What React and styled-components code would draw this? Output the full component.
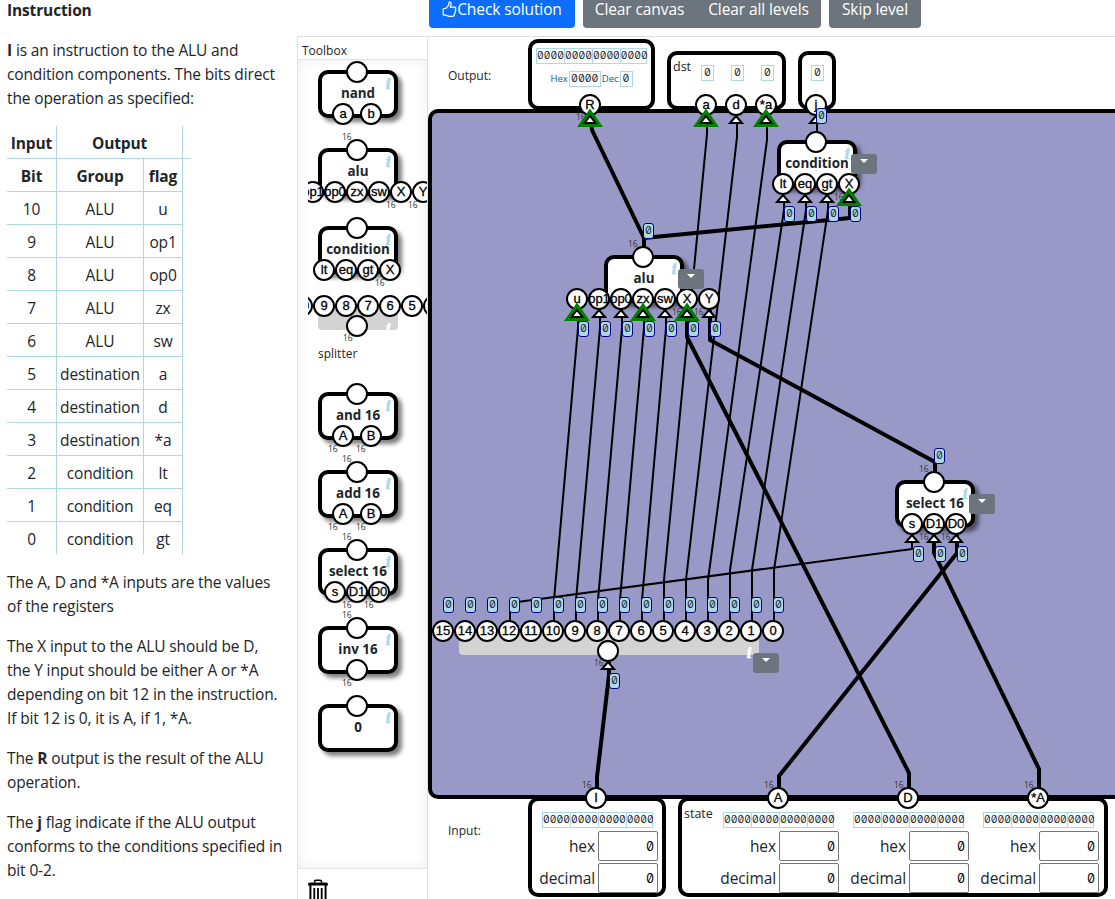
import React from 'react';
import styled, { createGlobalStyle, css } from 'styled-components';

const GlobalStyle = createGlobalStyle`
  *, *::before, *::after { box-sizing: border-box; }
  body {
    margin: 0;
    background: #fff;
    color: #212529;
    font-family: "Open Sans", "Noto Sans", sans-serif;
    font-size: 15.5px;
    line-height: 24px;
    overflow: hidden;
  }
`;

const mono = css`
  font-family: Inter, "DejaVu Sans Mono", monospace;
  font-feature-settings: "zero" 1, "tnum" 1;
`;

const Page = styled.div`
  display: flex;
  width: 1115px;
  height: 899px;
  overflow: hidden;
`;

/* ---------- Instructions ---------- */

const Instructions = styled.section`
  flex: none;
  width: 297px;
  padding-left: 7px;
  margin-top: -2px;
  white-space: nowrap;
  letter-spacing: -0.14px;
`;

const Heading = styled.h3`
  margin: 0 0 16px;
  font-size: inherit;
  font-weight: 700;
`;

const Text = styled.p`
  margin: 0 0 16px;
`;

const Table = styled.table`
  table-layout: fixed;
  width: 184px;
  margin: 0 0 16px;
  border-collapse: separate;
  border-spacing: 0;
`;

const Cell = styled.td`
  height: ${(p) => (p.$last ? 32 : 33)}px;
  padding: 1px 0 0;
  text-align: center;
  font-weight: ${(p) => (p.$head ? 700 : 400)};
  border-right: ${(p) => (p.$open ? 'none' : '1px solid lightblue')};
  border-bottom: ${(p) => (p.$last ? 'none' : '1px solid lightblue')};
`;

/* ---------- Toolbox ---------- */

const Main = styled.div`
  flex: none;
  width: 900px;
  display: flex;
  flex-direction: column;
`;

const Toolbar = styled.header`
  flex: none;
  height: 36px;
  padding: 0 0 8px 132px;
  display: flex;
  align-items: flex-end;
  gap: 8px;
`;

const ButtonGroup = styled.div`
  display: flex;
`;

const Button = styled.button`
  width: ${(p) => p.$w}px;
  height: 38px;
  padding: 0;
  border: 0;
  border-radius: ${(p) => p.$radius || '4px'};
  background: ${(p) => (p.$primary ? '#0d6efd' : '#6c757d')};
  color: #fff;
  font: 400 15.5px/24px "Open Sans", "Noto Sans", sans-serif;
  letter-spacing: -0.1px;
  white-space: nowrap;
  display: flex;
  align-items: center;
  justify-content: center;
`;

const Columns = styled.div`
  flex: none;
  height: 863px;
  display: flex;
  border-top: 1px solid #dee2e6;
`;

const Toolbox = styled.aside`
  flex: none;
  width: 131px;
  display: flex;
  flex-direction: column;
  border-left: 1px solid #dee2e6;
  border-right: 1px solid #dee2e6;
`;

const ToolboxTitle = styled.div`
  height: 23px;
  padding: 3px 0 0 4px;
  font-size: 12px;
  line-height: 22px;
  border-bottom: 1px solid #dee2e6;
`;

const ToolList = styled.div`
  height: 809px;
  padding-left: 10px;
  background: #fff;
  box-shadow: inset 0 0 14px rgba(0, 0, 0, 0.07);
  border-bottom: 1px solid #dee2e6;
`;

const ToolScroll = styled.div`
  height: 808px;
  padding: 10px 0 0 10px;
  overflow: hidden;
`;

const Tool = styled.div`
  height: ${(p) => p.$h || 78}px;
`;

const ToolCaption = styled.div`
  padding-top: 15px;
  font-size: 12px;
  line-height: 22px;
`;

const Trash = styled.div`
  padding: 10px 0 0 10px;
  svg { display: block; }
`;

/* ---------- Components of a circuit ---------- */

const NodeRoot = styled.div`
  position: ${(p) => (p.$placed ? 'absolute' : 'relative')};
  left: ${(p) => p.$x || 0}px;
  top: ${(p) => p.$y || 0}px;
  width: ${(p) => p.$w || 80}px;
`;

const NodeBox = styled.div`
  height: 48px;
  padding-top: 8px;
  border: 4px solid #000;
  border-radius: 10px;
  background: #fff;
  box-shadow: 4px 4px 4px rgba(0, 0, 0, 0.5);
  text-align: center;
  font-size: 13.4px;
  font-weight: 700;
  line-height: 22px;
  white-space: nowrap;
`;

const SplitterBox = styled.div`
  height: 24px;
  border-radius: 0 0 4px 4px;
  background: lightgray;
`;

const PinRow = styled.div`
  position: absolute;
  left: ${(p) => p.$cx || 39}px;
  top: ${(p) => p.$top}px;
  transform: translateX(-50%);
  display: flex;
  gap: ${(p) => p.$gap || 0}px;
`;

const Pin = styled.div`
  position: ${(p) => (p.$placed ? 'absolute' : 'relative')};
  left: ${(p) => (p.$placed ? p.$x - 11 : 0)}px;
  top: ${(p) => (p.$placed ? p.$y - 11 : 0)}px;
  flex: none;
  width: 22px;
  height: 22px;
  border: 2px solid #000;
  border-radius: 50%;
  background: #fff;
  color: #000;
  display: flex;
  align-items: center;
  justify-content: center;
  font: 400 13px/18px "Liberation Sans", Arial, sans-serif;
  -webkit-text-stroke: 0.3px #000;
  white-space: nowrap;
`;

const Width16 = styled.span`
  position: absolute;
  left: ${(p) => p.$x}px;
  top: ${(p) => p.$y}px;
  color: #333;
  font: 400 8.5px/10px "Open Sans", sans-serif;
  -webkit-text-stroke: 0;
`;

const Info = styled.span`
  position: absolute;
  right: ${(p) => p.$right || 7}px;
  top: ${(p) => p.$top || 6}px;
  color: ${(p) => (p.$white ? '#fff' : 'lightblue')};
  font: italic 700 14.5px/16px "DejaVu Serif", "Liberation Serif", serif;
  -webkit-text-stroke: 0.4px currentColor;
`;

const MenuButton = styled.button`
  position: absolute;
  left: ${(p) => p.$x}px;
  top: ${(p) => p.$y}px;
  width: 26px;
  height: 20px;
  padding: 5px 0 0;
  border: 0;
  border-radius: 3px;
  background: #6c757d;
  display: flex;
  align-items: flex-start;
  justify-content: center;
  &::after {
    content: '';
    width: 0;
    height: 0;
    border-top: 4.5px solid #fff;
    border-left: 4.5px solid transparent;
    border-right: 4.5px solid transparent;
  }
`;

/* ---------- Workspace ---------- */

const Workspace = styled.main`
  width: 700px;
  display: flex;
  flex-direction: column;
`;

const OutputRow = styled.div`
  flex: none;
  height: 72px;
  display: flex;
  align-items: flex-end;
`;

const InputRow = styled.div`
  flex: none;
  display: flex;
  align-items: flex-start;
  margin-top: -2px;
`;

const RowLabel = styled.div`
  flex: none;
  align-self: ${(p) => p.$align || 'center'};
  width: 100px;
  padding: ${(p) => p.$pad || '6px 0 0 20px'};
  font-size: 12px;
`;

const Terminal = styled.div`
  flex: none;
  width: ${(p) => p.$w}px;
  height: ${(p) => p.$h}px;
  margin: ${(p) => p.$m || 0};
  padding-top: ${(p) => p.$pt || 0}px;
  border: 4px solid #000;
  border-radius: 10px;
  background: #fff;
  display: flex;
  flex-direction: ${(p) => (p.$column ? 'column' : 'row')};
  align-items: ${(p) => (p.$column ? 'center' : 'flex-start')};
`;

const GroupLabel = styled.div`
  flex: none;
  width: ${(p) => p.$w}px;
  padding: ${(p) => p.$pad};
  font-size: 12.5px;
  line-height: 18px;
`;

const Bits = styled.div`
  display: flex;
  width: 111px;
  height: 16px;
  border: 1px solid lightblue;
`;

const Nibble = styled.span`
  ${mono}
  flex: 1;
  text-align: center;
  font-size: 10.4px;
  line-height: 14px;
  color: #212529;
  & + & { border-left: 1px solid lightblue; }
`;

const ReadoutRow = styled.div`
  display: flex;
  align-items: center;
  gap: 1px;
  margin-top: 7px;
  color: #0b5f85;
  font-size: 9.5px;
  line-height: 16px;
`;

const Digit = styled.span`
  ${mono}
  width: ${(p) => p.$w || 13}px;
  height: 16px;
  margin: ${(p) => p.$m || 0};
  border: 1px solid lightblue;
  text-align: center;
  font-size: 10.6px;
  line-height: 14px;
  color: #212529;
`;

const InputCell = styled.div`
  flex: none;
  width: 130px;
  padding: 11px 4px 0 0;
  display: flex;
  flex-direction: column;
  align-items: flex-end;
`;

const CellBits = styled(Bits)`
  margin: 0 5px 2px 0;
`;

const Field = styled.label`
  display: flex;
  align-items: center;
  gap: 3px;
  height: 32px;
  font-size: 15.5px;
  letter-spacing: -0.1px;
`;

const FieldValue = styled.span`
  ${mono}
  width: 60px;
  height: 30px;
  padding-right: 3px;
  border: 1px solid #767676;
  border-radius: 2px;
  text-align: right;
  font-size: 12.5px;
  line-height: 29px;
  color: #000;
`;

const Board = styled.div`
  position: relative;
  z-index: 1;
  flex: none;
  width: 700px;
  height: 690px;
  border: 4px solid #000;
  border-radius: 10px;
  background: #9999c8;
`;

const Layer = styled.div`
  position: absolute;
  inset: -4px;
`;

const Wires = styled.svg`
  position: absolute;
  left: 0;
  top: 0;
  overflow: visible;
`;

const Value = styled.span`
  ${mono}
  position: absolute;
  left: ${(p) => p.$x - 5.5}px;
  top: ${(p) => p.$y - 8}px;
  width: 11px;
  height: 16px;
  border: 1px solid #000080;
  border-radius: 3px;
  background: lightblue;
  color: #212529;
  display: flex;
  justify-content: center;
  font-size: 10.6px;
  line-height: 14px;
`;

/* Board coordinates start at this offset. */
const OX = 428;
const OY = 109;
const bx = (x) => x - OX;
const by = (y) => y - OY;

function Node({ title, out16, pins = [], wide = [], gap = 0, menu, ...pos }) {
  return (
    <NodeRoot {...pos}>
      <NodeBox>{title}</NodeBox>
      <Info>i</Info>
      <Pin $placed $x={39} $y={2} />
      {out16 && <Width16 $x={24} $y={-16}>16</Width16>}
      <PinRow $top={33} $gap={gap}>
        {pins.map((p, i) => (
          <Pin key={i}>
            {p}
            {wide.includes(i) && <Width16 $x={-6} $y={17}>16</Width16>}
          </Pin>
        ))}
      </PinRow>
      {menu && <MenuButton $x={74} $y={14} />}
    </NodeRoot>
  );
}

const BITS = Array.from({ length: 16 }, (_, i) => 15 - i);

function Splitter({ w, cx, rowCx, menu, ...pos }) {
  return (
    <NodeRoot $w={w} {...pos}>
      <SplitterBox />
      <Info $white $right={7} $top={menu ? 14 : 15}>i</Info>
      <PinRow $top={-11} $cx={rowCx}>
        {BITS.map((b) => <Pin key={b}>{b}</Pin>)}
      </PinRow>
      <Pin $placed $x={cx} $y={20} />
      <Width16 $x={cx - 14} $y={27}>16</Width16>
      {menu && <MenuButton $x={294} $y={22} />}
    </NodeRoot>
  );
}

function BitString({ as: Wrap = Bits }) {
  return <Wrap>{[0, 1, 2, 3].map((i) => <Nibble key={i}>0000</Nibble>)}</Wrap>;
}

function InputGroup() {
  return (
    <InputCell>
      <BitString as={CellBits} />
      <Field>hex<FieldValue>0</FieldValue></Field>
      <Field>decimal<FieldValue>0</FieldValue></Field>
    </InputCell>
  );
}

const thin = [
  ...[[553, 577], [575, 599], [597, 621], [619, 643], [641, 665]].map(([s, t]) => [
    [s + 1, 625], [s + 1, 600], [t + 1, 328], [t + 1, 310],
  ]),
  ...[[663, 706, 134], [685, 736, 137], [707, 766, 140]].map(([s, t, y]) => [
    [s + 1, 625], [s + 1, 580], [t + 1, y], [t + 1, 116],
  ]),
  ...[[729, 783], [751, 805], [773, 827]].map(([s, t]) => [
    [s + 1, 625], [s + 1, 570], [t + 1, 210], [t + 1, 195],
  ]),
  [[510, 625], [510, 603], [912, 549], [912, 535]],
  [[817, 120], [817, 142]],
];

const thick = [
  [[591, 120], [592, 130], [644, 238], [644, 257]],
  [[644, 238], [850, 218], [850, 195]],
  [[687, 310], [687, 337], [909, 773], [909, 797]],
  [[710, 310], [710, 340], [935, 462], [935, 482]],
  [[934, 535], [934, 553], [1039, 769], [1039, 797]],
  [[957, 535], [957, 553], [779, 776], [779, 797]],
  [[609, 662], [609, 675], [597, 777], [597, 797]],
];

const arrows = [
  [736, 105], [816, 105], [783, 184], [805, 184], [827, 184],
  [599, 299], [621, 299], [665, 299], [709, 299],
  [912, 524], [934, 524], [956, 524], [608, 651],
];
const greenArrows = [
  [590, 105], [706, 105], [766, 105], [849, 184], [577, 299], [643, 299], [687, 299],
];

const values = [
  [821.5, 116], [648.5, 231], [939.5, 456],
  ...[783, 805, 827, 849].map((x) => [x + 6.5, 214]),
  ...[577, 599, 621, 643, 665, 687, 709].map((x) => [x + 6.5, 329]),
  ...[912, 934, 956].map((x) => [x + 6.5, 554]),
  ...BITS.map((b, i) => [443.5 + 22 * i + 5, 605]),
  [614.5, 681],
];

const ports = [
  ['R', 590, 105], ['a', 706, 105], ['d', 736, 105], ['*a', 766, 105], ['j', 816, 105],
  ['I', 596, 798], ['A', 778, 798], ['D', 908, 798], ['*A', 1038, 798],
];

const rows = [
  [10, 'ALU', 'u'], [9, 'ALU', 'op1'], [8, 'ALU', 'op0'], [7, 'ALU', 'zx'], [6, 'ALU', 'sw'],
  [5, 'destination', 'a'], [4, 'destination', 'd'], [3, 'destination', '*a'],
  [2, 'condition', 'lt'], [1, 'condition', 'eq'], [0, 'condition', 'gt'],
];

const path = (pts) => 'M' + pts.map((p) => p.join(' ')).join('L');

function Circuit() {
  return (
    <Layer>
      <Wires width="700" height="690" viewBox={`${OX} ${OY} 700 690`} fill="none" stroke="#000" strokeLinejoin="round">
        {thin.map((w, i) => <path key={i} d={path(w)} strokeWidth="2" />)}
        {thick.map((w, i) => <path key={i} d={path(w)} strokeWidth="4" />)}
      </Wires>
      <Node title="condition" pins={['lt', 'eq', 'gt', 'X']} wide={[3]} menu $placed $x={bx(777)} $y={by(140)} />
      <Node title="alu" out16 pins={['u', 'op1', 'op0', 'zx', 'sw', 'X', 'Y']} wide={[5, 6]} menu $placed $x={bx(604)} $y={by(255)} />
      <Node title="select 16" out16 pins={['s', 'D1', 'D0']} wide={[1, 2]} menu $placed $x={bx(895)} $y={by(480)} />
      <Splitter w={300} cx={149} rowCx={149} menu $placed $x={bx(459)} $y={by(631)} />
      {ports.map(([t, x, y]) => <Pin key={t} $placed $x={bx(x)} $y={by(y)}>{t}</Pin>)}
      <Width16 $x={bx(576)} $y={by(112)}>16</Width16>
      {[596, 778, 908, 1038].map((x) => <Width16 key={x} $x={bx(x - 14)} $y={by(780)}>16</Width16>)}
      <Wires width="700" height="690" viewBox={`${OX} ${OY} 700 690`} fill="#fff" stroke="#000">
        {arrows.map(([x, y]) => (
          <path key={`${x}-${y}`} strokeWidth="2" d={`M${x} ${y + 11}L${x + 6} ${y + 18}H${x - 6}Z`} />
        ))}
        {greenArrows.map(([x, y]) => (
          <g key={`${x}-${y}`}>
            <path d={`M${x} ${y + 3.5}L${x + 13} ${y + 22}H${x - 13}Z`} fill="green" stroke="none" />
            <path strokeWidth="2" d={`M${x} ${y + 11}L${x + 5.5} ${y + 18}H${x - 5.5}Z`} />
          </g>
        ))}
      </Wires>
      {values.map(([x, y]) => <Value key={`${x}-${y}`} $x={bx(x)} $y={by(y)}>0</Value>)}
    </Layer>
  );
}

export default function App() {
  return (
    <Page>
      <GlobalStyle />
      <Instructions>
        <Heading>Instruction</Heading>
        <Text>
          <b>I</b> is an instruction to the ALU and<br />
          condition components. The bits direct<br />
          the operation as specified:
        </Text>
        <Table>
          <colgroup>
            <col width="50" />
            <col width="87" />
            <col width="39" />
            <col width="8" />
          </colgroup>
          <tbody>
            <tr>
              <Cell as="th" $head>Input</Cell>
              <Cell as="th" $head colSpan={2}>Output</Cell>
              <Cell as="th" $open />
            </tr>
            <tr>
              <Cell as="th" $head>Bit</Cell>
              <Cell as="th" $head>Group</Cell>
              <Cell as="th" $head>flag</Cell>
            </tr>
            {rows.map((r, i) => (
              <tr key={r[0]}>
                {r.map((c, j) => <Cell key={j} $last={i === rows.length - 1}>{c}</Cell>)}
              </tr>
            ))}
          </tbody>
        </Table>
        <Text>
          The A, D and *A inputs are the values<br />
          of the registers
        </Text>
        <Text>
          The X input to the ALU should be D,<br />
          the Y input should be either A or *A<br />
          depending on bit 12 in the instruction.<br />
          If bit 12 is 0, it is A, if 1, *A.
        </Text>
        <Text>
          The <b>R</b> output is the result of the ALU<br />
          operation.
        </Text>
        <Text>
          The <b>j</b> flag indicate if the ALU output<br />
          conforms to the conditions specified in<br />
          bit 0-2.
        </Text>
      </Instructions>

      <Main>
        <Toolbar>
          <Button $w={146} $primary>
            <svg width="15" height="17" viewBox="0 0 15 17" fill="none" stroke="#fff" strokeWidth="1.2" strokeLinejoin="round">
              <path d="M1.2 7.5H3.8L6.6 4.2 7.1 1.4C7.3.6 9.1.7 9.1 2.6 9.1 4.2 8.4 5.3 8.4 6.2H12.6C13.9 6.2 14.1 7.9 13.2 8.5 14 9.2 13.7 10.5 12.9 10.8 13.4 11.6 13 12.7 12.3 13 12.6 14.2 12 15.3 10.6 15.3H7.3C5.6 15.3 4.7 14.2 3.7 14.2H1.2" />
              <path d="M1.2 7.5V14.2" />
            </svg>
            Check solution
          </Button>
          <ButtonGroup>
            <Button $w={113} $radius="4px 0 0 4px">Clear canvas</Button>
            <Button $w={125} $radius="0 4px 4px 0">Clear all levels</Button>
          </ButtonGroup>
          <Button $w={92}>Skip level</Button>
        </Toolbar>
        <Columns>
          <Toolbox>
            <ToolboxTitle>Toolbox</ToolboxTitle>
            <ToolList>
              <ToolScroll>
                <Tool><Node title="nand" pins={['a', 'b']} gap={6} /></Tool>
                <Tool><Node title="alu" out16 pins={['u', 'op1', 'op0', 'zx', 'sw', 'X', 'Y']} wide={[5, 6]} /></Tool>
                <Tool><Node title="condition" pins={['lt', 'eq', 'gt', 'X']} wide={[3]} /></Tool>
                <Tool $h={88}>
                  <Splitter w={80} cx={39} rowCx={39} $y={2} />
                  <ToolCaption>splitter</ToolCaption>
                </Tool>
                <Tool><Node title="and 16" pins={['A', 'B']} wide={[0, 1]} gap={6} /></Tool>
                <Tool><Node title="add 16" out16 pins={['A', 'B']} wide={[0, 1]} gap={6} /></Tool>
                <Tool><Node title="select 16" out16 pins={['s', 'D1', 'D0']} wide={[1, 2]} /></Tool>
                <Tool><Node title="inv 16" out16 pins={['']} wide={[0]} /></Tool>
                <Tool><Node title="0" /></Tool>
              </ToolScroll>
            </ToolList>
            <Trash>
              <svg width="20" height="24" viewBox="0 0 20 24" fill="none" stroke="#000">
                <path d="M6.5 3.5V2.6Q6.5 1.2 8 1.2H12Q13.5 1.2 13.5 2.6V3.5" strokeWidth="1.6" />
                <path d="M0 6.5V5.2Q0 3.4 2 3.4H18Q20 3.4 20 5.2V6.5Z" fill="#000" stroke="none" />
                <path d="M2.4 6V20.5Q2.4 22.6 4.5 22.6H15.5Q17.6 22.6 17.6 20.5V6" strokeWidth="2" />
                <path d="M6.3 9V20M10 9V20M13.7 9V20" strokeWidth="1.8" />
              </svg>
            </Trash>
          </Toolbox>
          <Workspace>
            <OutputRow>
              <RowLabel>Output:</RowLabel>
              <Terminal $w={127} $h={71} $pt={5} $column $m="0 12px -1px 0">
                <BitString />
                <ReadoutRow>
                  Hex<Digit $w={32}>0000</Digit>Dec<Digit>0</Digit>
                </ReadoutRow>
              </Terminal>
              <Terminal $w={119} $h={59} $m="0 12px -1px 0">
                <GroupLabel $w={30} $pad="3px 0 0 2px">dst</GroupLabel>
                <Digit $m="10px 17px 0 0">0</Digit>
                <Digit $m="10px 17px 0 0">0</Digit>
                <Digit $m="10px 0 0 0">0</Digit>
              </Terminal>
              <Terminal $w={38} $h={59} $m="0 0 -1px 0">
                <Digit $m="10px 0 0 9px">0</Digit>
              </Terminal>
            </OutputRow>
            <Board>
              <Circuit />
            </Board>
            <InputRow>
              <RowLabel $align="flex-start" $pad="22px 0 0 20px">Input:</RowLabel>
              <Terminal $w={138} $h={100} $m="0 12px 0 0">
                <InputGroup />
              </Terminal>
              <Terminal $w={430} $h={100}>
                <GroupLabel $w={31} $pad="4px 0 0 2px">state</GroupLabel>
                <InputGroup />
                <InputGroup />
                <InputGroup />
              </Terminal>
            </InputRow>
          </Workspace>
        </Columns>
      </Main>
    </Page>
  );
}
